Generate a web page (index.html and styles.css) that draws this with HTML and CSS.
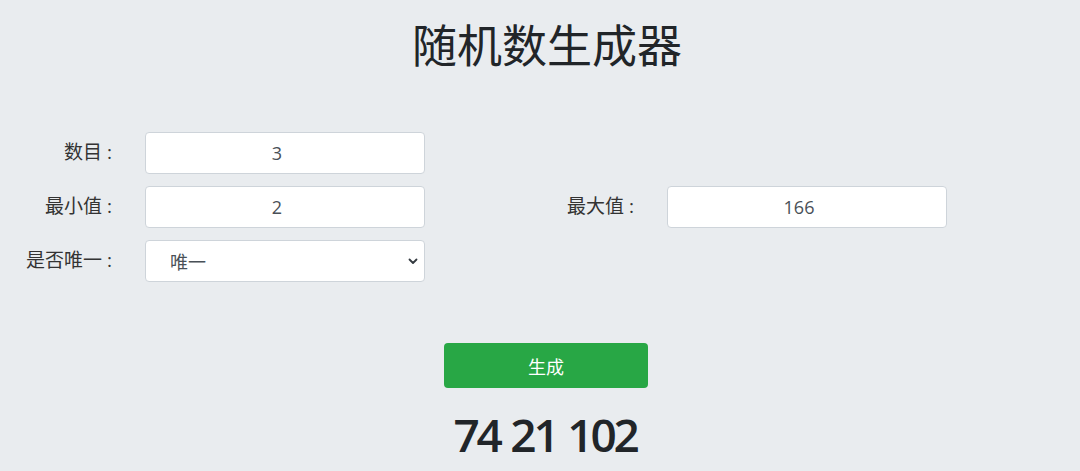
FILE: index.html
```html
<!DOCTYPE html>
<html lang="zh">
<head>
<meta charset="utf-8">
<title>随机数生成器</title>
<link rel="stylesheet" href="styles.css">
</head>
<body>
<div class="page">
  <h1 class="title">随机数生成器</h1>
  <div class="form">
    <div class="row">
      <label class="label">数目 :</label>
      <input class="field" type="text" value="3">
    </div>
    <div class="row">
      <label class="label">最小值 :</label>
      <input class="field" type="text" value="2">
      <label class="label label-right">最大值 :</label>
      <input class="field" type="text" value="166">
    </div>
    <div class="row">
      <label class="label">是否唯一 :</label>
      <div class="select">
        <span class="select-text">唯一</span>
        <svg class="chev" width="10" height="8" viewBox="0 0 10 8"><path d="M1.5 2.5 L5 6 L8.5 2.5" fill="none" stroke="#343a40" stroke-width="1.8" stroke-linecap="round" stroke-linejoin="round"/></svg>
      </div>
    </div>
  </div>
  <div class="actions">
    <button class="btn">生成</button>
    <div class="result">74 21 102</div>
  </div>
</div>
</body>
</html>
```

FILE: styles.css
```css
* { box-sizing: border-box; }
html, body { margin: 0; padding: 0; }
body {
  background: #e9ecef;
  font-family: "Open Sans", "Noto Sans CJK SC", sans-serif;
  color: #212529;
  height: 471px;
  overflow: hidden;
}
.page { display: flex; flex-direction: column; }
.title {
  margin: 16px 0 0;
  text-align: center;
  font-weight: 400;
  font-size: 45px;
  line-height: 60px;
  color: #212529;
  padding-left: 14px;
}
.form {
  margin-top: 56px;
  display: flex;
  flex-direction: column;
  gap: 12px;
}
.row { display: flex; align-items: center; height: 42px; }
.label {
  width: 112px;
  text-align: right;
  font-size: 19px;
  line-height: 24px;
  margin-top: -3px;
  color: #333;
  margin-right: 33px;
  white-space: nowrap;
}
.label-right { width: 80px; margin-left: 129px; margin-right: 33px; }
.field {
  width: 280px;
  height: 42px;
  border: 1px solid #ced4da;
  border-radius: 4px;
  background: #fff;
  text-align: center;
  font-family: "Open Sans", "Noto Sans CJK SC", sans-serif;
  font-size: 18px;
  color: #495057;
  padding: 0 28px 0 12px;
}
.select {
  width: 280px;
  height: 42px;
  border: 1px solid #ced4da;
  border-radius: 4px;
  background: #fff;
  display: flex;
  align-items: center;
  justify-content: space-between;
  padding: 0 6px 0 24px;
  font-size: 18px;
  color: #495057;
}
.actions {
  margin-top: 61px;
  display: flex;
  flex-direction: column;
  align-items: center;
}
.btn {
  width: 204px;
  height: 45px;
  margin-left: 12px;
  border: none;
  border-radius: 4px;
  background: #28a745;
  color: #fff;
  font-family: "Open Sans", "Noto Sans CJK SC", sans-serif;
  font-size: 18px;
}
.result {
  margin-top: 16px;
  margin-left: 10px;
  font-size: 46px;
  font-weight: 600;
  line-height: 60px;
  color: #212529;
  letter-spacing: -3.2px;
  word-spacing: 2px;
}
```
